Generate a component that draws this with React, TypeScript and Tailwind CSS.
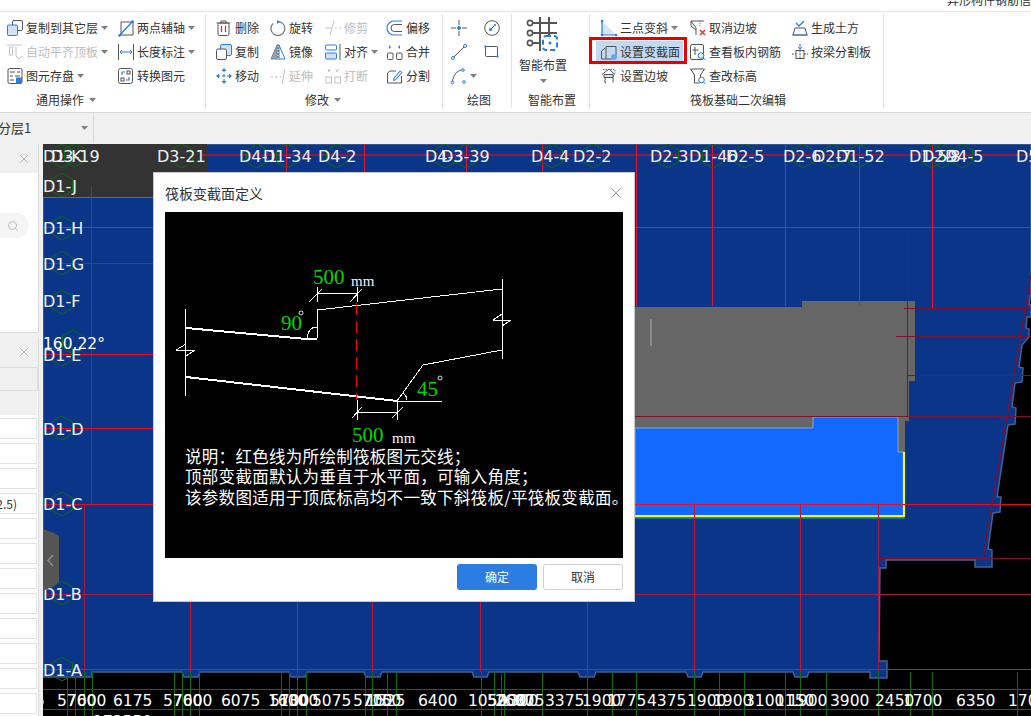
import type { ReactNode } from "react";
import { Search, X } from "lucide-react";

const B = "#2a7de1";
const G = "#555555";
const L = "#c4c4c4";

function Svg({ children, size = 16 }: { children: ReactNode; size?: number }) {
  return (
    <svg width={size} height={size} viewBox="0 0 16 16" fill="none" strokeWidth="1" className="block overflow-visible">
      {children}
    </svg>
  );
}

const icons: Record<string, ReactNode> = {
  copyLayer: (
    <Svg>
      <rect x="5.5" y="0.5" width="10" height="10" rx="1.5" stroke={G} fill="#fff" />
      <rect x="0.5" y="5" width="10" height="10.5" rx="1" stroke={B} fill="#cfe2f8" />
    </Svg>
  ),
  autoAlign: (
    <Svg>
      <path d="M0 1h15M2.5 3v8h3V3zM9 3v9l3 3 3-3" stroke={L} />
    </Svg>
  ),
  save: (
    <Svg>
      <rect x="1" y="0.5" width="14" height="15" rx="1.5" stroke={G} />
      <path d="M3 4h5M10 4h3M3 8h3M8 8h5M3 12h4" stroke={G} />
      <rect x="9" y="9.5" width="6" height="6" fill={B} />
    </Svg>
  ),
  axis: (
    <Svg>
      <path d="M3 2h12M3 2v13M15 2v13M3 15h12" stroke={G} />
      <path d="M1 16L15 1" stroke={B} strokeWidth="1.4" />
      <circle cx="1.5" cy="15.5" r="1.3" fill={B} />
      <circle cx="14.5" cy="1.5" r="1.3" fill={B} />
    </Svg>
  ),
  measure: (
    <Svg>
      <path d="M0.5 0v16M15.5 0v16" stroke={G} />
      <path d="M2 8h12M4 6L2 8l2 2M12 6l2 2-2 2" stroke={B} />
    </Svg>
  ),
  convert: (
    <Svg>
      <rect x="0.5" y="0.5" width="14" height="15" rx="2" stroke={G} />
      <path d="M4 7V4h3M11 9v3H8" stroke={B} strokeWidth="1.2" />
      <rect x="9" y="3" width="3" height="3" stroke={G} />
      <rect x="3" y="10" width="3" height="3" stroke={G} />
    </Svg>
  ),
  trash: (
    <Svg>
      <path d="M0.5 3h14M5 3V1h5v2" stroke={G} />
      <rect x="2" y="3" width="11" height="12.5" rx="1.5" stroke={G} />
      <path d="M5.5 6v6M9.5 6v6" stroke="#e02020" strokeWidth="1.2" />
    </Svg>
  ),
  rotate: (
    <Svg>
      <path d="M9 1.6A7 7 0 1 1 3 3.5" stroke={G} strokeOpacity="0.8" strokeWidth="1.2" />
      <path d="M7 0l3 2-3 2z" fill={B} />
    </Svg>
  ),
  copy: (
    <Svg>
      <rect x="4.5" y="0.5" width="11" height="11" rx="1.5" stroke={B} fill="#cfe2f8" />
      <rect x="0.5" y="5" width="10" height="10.5" rx="1.5" stroke={G} fill="#fff" />
    </Svg>
  ),
  mirror: (
    <Svg>
      <path d="M7 1L1 15h6z" fill="#9aa2ad" stroke="#7b8593" />
      <path d="M9 1l6 14H9z" fill="#fff" stroke={B} />
      <path d="M8 0v16" stroke={G} strokeDasharray="2 1" />
    </Svg>
  ),
  move: (
    <Svg>
      <path d="M8 1v14M1 8h14" stroke={B} strokeDasharray="3 2" />
      <path d="M8 0l2.5 3h-5zM8 16l2.5-3h-5zM0 8l3-2.5v5zM16 8l-3-2.5v5z" fill={B} />
    </Svg>
  ),
  extend: (
    <Svg>
      <path d="M0 9h3M5 9h3M10 9h2M15 1l-3 15" stroke={L} />
    </Svg>
  ),
  trim: (
    <Svg>
      <path d="M0 8h7M10 8h2M14 8h2M9 1L5 15" stroke={L} />
    </Svg>
  ),
  break: (
    <Svg>
      <rect x="1" y="9" width="5.5" height="6" stroke={L} />
      <rect x="10" y="9" width="5.5" height="6" stroke={L} />
      <path d="M3 1l1 3M5 1L4 4M11 1l1 3M14 1l-2 3" stroke={L} />
    </Svg>
  ),
  align: (
    <Svg>
      <rect x="0.5" y="1" width="11" height="5" rx="1" stroke={B} />
      <rect x="0.5" y="9" width="11" height="6" rx="1" stroke={B} fill="#cfe2f8" />
      <path d="M15 0v16" stroke={G} />
    </Svg>
  ),
  offset: (
    <Svg>
      <path d="M15 1H7a7 7 0 0 0 0 14h8" stroke={B} strokeWidth="1.2" />
      <path d="M15 4.500H7.500a3.500 3.500 0 0 0 0 7H15" stroke={G} />
    </Svg>
  ),
  merge: (
    <Svg>
      <rect x="0.5" y="9" width="5.500" height="6.500" rx="1" stroke={G} />
      <rect x="9.500" y="9" width="5.500" height="6.500" rx="1" stroke={G} />
      <path d="M2 1l2 2-2 2zM13 1l-2 2 2 2z" fill={B} />
    </Svg>
  ),
  split: (
    <Svg>
      <path d="M14.500 8v7H.5V5L3 3h6" stroke={G} />
      <path d="M7 10l6-7 2 1.500-6 7-2.500 1z" stroke={B} fill="#cfe2f8" />
    </Svg>
  ),
  point: (
    <Svg>
      <path d="M0 8h5M11 8h5M8 0v5M8 11v5" stroke={G} />
      <circle cx="8" cy="8" r="2" fill={B} />
    </Svg>
  ),
  dial: (
    <Svg>
      <circle cx="8" cy="8" r="7.300" stroke={G} />
      <path d="M7 9l4-4" stroke={G} />
      <circle cx="6.500" cy="9.500" r="1.500" fill={B} />
      <circle cx="11" cy="5" r="1" fill={B} />
    </Svg>
  ),
  line: (
    <Svg>
      <path d="M2 14L14 2" stroke={G} />
      <circle cx="2" cy="14" r="1.500" stroke={B} fill="#fff" />
      <circle cx="14" cy="2" r="1.500" stroke={B} fill="#fff" />
    </Svg>
  ),
  rect: (
    <Svg>
      <rect x="1.500" y="2.500" width="12" height="10" rx="1" stroke={G} />
      <rect x="0.500" y="1.500" width="2" height="2" fill={B} />
      <rect x="12.500" y="11.500" width="2" height="2" fill={B} />
    </Svg>
  ),
  arc: (
    <Svg>
      <path d="M1.500 14C2 7 6 2.500 11 2" stroke={G} />
      <circle cx="1.500" cy="14.500" r="1.300" stroke={B} fill="#fff" />
      <circle cx="12" cy="2" r="1.300" stroke={B} fill="#fff" />
      <circle cx="13" cy="14" r="1.300" stroke={B} fill="#fff" />
    </Svg>
  ),
  threePoint: (
    <Svg>
      <path d="M1 1v14h14z" fill="#d5e5f8" />
      <path d="M1 1v14h14" stroke={B} strokeWidth="1.200" />
      <circle cx="1" cy="1" r="1.300" fill={B} />
      <circle cx="1" cy="15" r="1.300" fill={B} />
      <circle cx="15" cy="15" r="1.300" fill={B} />
    </Svg>
  ),
  section: (
    <Svg>
      <path d="M0.500 7L5 3.500V15H.5zM5 2.500h10v9" stroke={G} />
      <path d="M5 15h6" stroke={G} />
      <circle cx="13" cy="13" r="3" fill="#6fa5e6" />
    </Svg>
  ),
  slope: (
    <Svg>
      <path d="M1 6.500L8 1l6 5.500M4 6.500V15h1M12 6.500v8" stroke={G} />
      <path d="M2 1.500h12v4" stroke={B} strokeDasharray="1.500 1" />
      <path d="M3 6.500h9v3H3z" fill="#cfe2f8" stroke={G} />
    </Svg>
  ),
  cancelSlope: (
    <Svg>
      <path d="M1 1h13M1 1l5 7v7M1 1v5l5 4" stroke={G} />
      <path d="M10 1v5" stroke={B} strokeDasharray="1 1" />
      <path d="M10 10l5 5M15 10l-5 5" stroke="#e03030" strokeWidth="1.400" />
    </Svg>
  ),
  rebar: (
    <Svg>
      <rect x="0.500" y="0.500" width="13" height="15" rx="1.500" stroke={G} />
      <path d="M5 3v8M2.500 6h6" stroke={G} />
      <circle cx="11" cy="11.500" r="2.800" stroke={B} fill="#fff" />
      <path d="M13 13.500l2.500 2.500" stroke={B} />
    </Svg>
  ),
  elevation: (
    <Svg>
      <path d="M0.500 1h14l-4 6v5M.5 1l4 6v8h5" stroke={G} />
      <circle cx="11.500" cy="12" r="2.800" stroke={B} fill="#fff" />
      <path d="M13.500 14l2 2" stroke={B} />
    </Svg>
  ),
  earth: (
    <Svg>
      <path d="M4 3l3 3 5-5" stroke={B} strokeWidth="1.400" />
      <path d="M3 8h10l2 7H1z" stroke={G} />
      <path d="M0 15h16" stroke={B} />
    </Svg>
  ),
  beamSplit: (
    <Svg>
      <path d="M8 0v5M6 3l2 2.500L10 3" stroke={B} />
      <rect x="4" y="6.500" width="8" height="8" stroke={G} />
      <path d="M0 10h4M12 10h4M8 6.500v8" stroke={G} strokeDasharray="2 1" />
    </Svg>
  ),
};

function Caret() {
  return (
    <svg width="7" height="4" viewBox="0 0 7 4" className="block shrink-0">
      <path d="M0 0h7L3.500 4z" fill="#808080" />
    </svg>
  );
}

function Tool({ icon, label, caret, disabled }: { icon: string; label: string; caret?: boolean; disabled?: boolean }) {
  return (
    <div className="flex h-[24px] items-center">
      <span className="mr-[3px] w-[16px] shrink-0">{icons[icon]}</span>
      <span className={disabled ? "whitespace-nowrap text-[#bdbdbd]" : "whitespace-nowrap text-[#333]"}>{label}</span>
      {caret && (
        <span className="ml-[3px]">
          <Caret />
        </span>
      )}
    </div>
  );
}

function IconTool({ icon, caret }: { icon: string; caret?: boolean }) {
  return (
    <div className="flex h-[24px] items-center gap-[3px]">
      <span className="w-[16px]">{icons[icon]}</span>
      {caret && <Caret />}
    </div>
  );
}

function Group({ className, label, labelClass, caret, children }: { className: string; label: string; labelClass: string; caret?: boolean; children: ReactNode }) {
  return (
    <div className={className}>
      <div className="mt-[4px] flex h-[72px]">{children}</div>
      <div className={`flex h-[24px] items-center gap-[5px] text-[#333] ${labelClass}`}>
        <span>{label}</span>
        {caret && <Caret />}
      </div>
    </div>
  );
}

function Sep() {
  return <div className="mt-[2px] h-[94px] w-px shrink-0 bg-[#e2e2e2]" />;
}

function Ribbon() {
  return (
    <div className="flex h-[100px] shrink-0 bg-white">
      <Group className="w-[205px] shrink-0" label="通用操作" labelClass="pl-[36px]" caret>
        <div className="ml-[7px] w-[111px]">
          <Tool icon="copyLayer" label="复制到其它层" caret />
          <Tool icon="autoAlign" label="自动平齐顶板" caret disabled />
          <Tool icon="save" label="图元存盘" caret />
        </div>
        <div>
          <Tool icon="axis" label="两点辅轴" caret />
          <Tool icon="measure" label="长度标注" caret />
          <Tool icon="convert" label="转换图元" />
        </div>
      </Group>
      <Sep />
      <Group className="w-[236px] shrink-0" label="修改" labelClass="pl-[99px]" caret>
        <div className="ml-[10px] w-[54px]">
          <Tool icon="trash" label="删除" />
          <Tool icon="copy" label="复制" />
          <Tool icon="move" label="移动" />
        </div>
        <div className="w-[55px]">
          <Tool icon="rotate" label="旋转" />
          <Tool icon="mirror" label="镜像" />
          <Tool icon="extend" label="延伸" disabled />
        </div>
        <div className="w-[62px]">
          <Tool icon="trim" label="修剪" disabled />
          <Tool icon="align" label="对齐" caret />
          <Tool icon="break" label="打断" disabled />
        </div>
        <div>
          <Tool icon="offset" label="偏移" />
          <Tool icon="merge" label="合并" />
          <Tool icon="split" label="分割" />
        </div>
      </Group>
      <Sep />
      <Group className="w-[68px] shrink-0" label="绘图" labelClass="pl-[24px]">
        <div className="ml-[8px] w-[33px]">
          <IconTool icon="point" />
          <IconTool icon="line" />
          <IconTool icon="arc" caret />
        </div>
        <div>
          <IconTool icon="dial" />
          <IconTool icon="rect" />
        </div>
      </Group>
      <Sep />
      <Group className="w-[77px] shrink-0" label="智能布置" labelClass="pl-[16px]">
        <div className="ml-[7px] flex w-[48px] flex-col items-center pt-[1px]">
          <svg width="34" height="34" viewBox="0 0 34 34" fill="none" className="block">
            <path d="M5 6h26M5 16h26M5 26h10M14 0v34M23 0v18" stroke={G} strokeWidth="2" />
            <circle cx="4" cy="6" r="2.600" stroke={G} strokeWidth="1.600" fill="#fff" />
            <circle cx="4" cy="16" r="2.600" stroke={G} strokeWidth="1.600" fill="#fff" />
            <circle cx="4" cy="26" r="2.600" stroke={G} strokeWidth="1.600" fill="#fff" />
            <rect x="17" y="19" width="14" height="14" rx="3" stroke={B} strokeWidth="2" strokeDasharray="5 3" fill="#fff" />
            <circle cx="24" cy="26" r="1.500" fill={B} />
          </svg>
          <div className="mt-[6px] whitespace-nowrap text-[#333]">智能布置</div>
          <div className="mt-[6px]">
            <Caret />
          </div>
        </div>
      </Group>
      <Sep />
      <Group className="w-[293px] shrink-0" label="筏板基础二次编辑" labelClass="pl-[100px]">
        <div className="ml-[11px] w-[89px]">
          <Tool icon="threePoint" label="三点变斜" caret />
          <div className="relative">
            <div className="absolute left-[-5px] top-[1px] h-[20px] w-[87px] bg-[#c2d9f2]" />
            <div className="relative">
              <Tool icon="section" label="设置变截面" />
            </div>
            <div className="absolute left-[-12px] top-[-3px] h-[27px] w-[98px] border-[3px] border-[#e80000]" />
          </div>
          <Tool icon="slope" label="设置边坡" />
        </div>
        <div className="w-[102px]">
          <Tool icon="cancelSlope" label="取消边坡" />
          <Tool icon="rebar" label="查看板内钢筋" />
          <Tool icon="elevation" label="查改标高" />
        </div>
        <div>
          <Tool icon="earth" label="生成土方" />
          <Tool icon="beamSplit" label="按梁分割板" />
        </div>
      </Group>
      <Sep />
    </div>
  );
}

function LeftPanels() {
  const rows = Array.from({ length: 12 }, (_, i) => i);
  return (
    <div className="flex w-[43px] shrink-0 flex-col overflow-hidden bg-[#f0f0f0]">
      <div className="h-[189px] w-[39px] shrink-0 border-r border-b border-[#dcdcdc] bg-white">
        <div className="flex h-[29px] items-center justify-end bg-[#f0f0f0] pr-[7px]">
          <X size={14} strokeWidth={1.2} color="#999" />
        </div>
        <div className="mt-[40px] flex h-[25px] w-[29px] items-center justify-end rounded-r-full bg-[#f5f5f5] pr-[10px]">
          <Search size={12} strokeWidth={1.5} color="#aaa" />
        </div>
      </div>
      <div className="mt-[4px] w-[39px] flex-1 border-r border-[#dcdcdc] bg-white">
        <div className="flex h-[30px] items-center justify-end bg-[#f0f0f0] pr-[7px]">
          <X size={14} strokeWidth={1.2} color="#999" />
        </div>
        <div className="h-[24px] w-[38px] border border-l-0 border-[#dedede] bg-[#f0f0f0]" />
        <div className="h-[24px] w-[37px] bg-[#f0f0f0]" />
        <div className="mt-[3px] flex flex-col gap-[4px]">
          {rows.map((i) => (
            <div key={i} className="flex h-[21px] w-[37px] items-center justify-end overflow-hidden border border-l-0 border-[#e2e2e2] bg-white pr-[19px] text-[12px] text-[#333]">
              {i === 3 ? "2.5)" : ""}
            </div>
          ))}
        </div>
      </div>
    </div>
  );
}

const FLAT = "'DejaVu Sans', sans-serif";
const BLUE = "#0b3588";

const hexes: [number, number][] = [
  [62, 156], [75, 155], [182, 156], [257, 156], [287, 156], [337, 156], [445, 156], [466, 156], [552, 156], [593, 156],
  [668, 156], [713, 156], [745, 156], [803, 156], [833, 156], [859, 156], [932, 156], [942, 156], [962, 156],
  [62, 185], [62, 228], [62, 263], [62, 302], [73, 342], [62, 354], [62, 428], [62, 504], [62, 593], [62, 669],
];

const sideLabels: [string, number, number][] = [
  ["D1-K", 43, 162], ["D3-19", 51, 162], ["D3-21", 157, 162], ["D4-1", 239, 162], ["D1-34", 263, 162], ["D4-2", 318, 162],
  ["D4-3", 425, 162], ["D3-39", 441, 162], ["D4-4", 531, 162], ["D2-2", 573, 162], ["D2-3", 650, 162], ["D1-46", 689, 162],
  ["D2-5", 726, 162], ["D2-6", 783, 162], ["D2-7", 813, 162], ["D1-52", 836, 162], ["D1-59", 909, 162], ["D2-8", 922, 162],
  ["D4-5", 945, 162], ["D5", 1016, 162],
  ["D1-J", 43, 192], ["D1-H", 43, 234], ["D1-G", 43, 270], ["D1-F", 43, 307], ["D1-E", 43, 361],
  ["D1-D", 43, 435], ["D1-C", 43, 510], ["D1-B", 43, 600], ["D1-A", 43, 676],
];

const spans: [string, number][] = [
  ["5", 35], ["5700", 57], ["7600", 67], ["6175", 113], ["5700", 163], ["7600", 173], ["6075", 221], ["5700", 270], ["1300", 279],
  ["1600", 268], ["5075", 312], ["5700", 353], ["7150", 362], ["1525", 366], ["6400", 418], ["1050", 468], ["5200", 487], ["2600", 495],
  ["1300", 499], ["875", 515], ["3375", 545], ["1900", 582], ["1775", 607], ["4375", 647], ["1900", 687], ["1900", 713], ["3100", 745],
  ["1150", 775], ["1900", 788], ["3900", 830], ["2450", 875], ["1700", 903], ["6350", 956], ["1700", 1008], ["172550", 93],
];

const bottomGrid = [67, 75, 84, 92, 174, 182, 190, 199, 281, 289, 297, 306, 365, 372, 387, 396, 481, 494, 501, 504, 542, 587, 612, 636, 694, 719, 744, 785, 800, 826, 878, 910, 932, 1017];

// Plate outline with the stepped column caps along the right and bottom edges.
const plate =
  "43,144 1031,144 1031,296 1030,296 1029,305 1031,305 1031,317 1027,317 1026,328 1029,329 1029,337 1022,345 1019,367 1023,368 1022,382 1015,383 1012,407 1016,408 1015,424 1008,425 997,497 1001,497 1000,512 993,513 988,549 992,550 992,567 975,567 975,560 886,560 886,568 880,568 879,661 887,661 887,678 870,678 870,672 809,672 807,677 795,677 793,672 703,672 701,677 688,677 686,672 596,672 594,677 580,677 578,672 489,672 487,677 474,677 472,672 382,672 380,677 366,677 364,672 307,672 305,677 291,677 289,672 200,672 198,677 184,677 182,672 92,672 92,677 43,677";

function Board() {
  const bright = "#e8102a";
  const dark = "#7d1230";
  return (
    <svg viewBox="43 144 988 572" width="988" height="572" className="block">
      <rect x="43" y="144" width="988" height="572" fill="#000" />
      <polygon points={plate} fill={BLUE} stroke="#44608f" strokeWidth="1.500" />
      <rect x="43" y="144" width="164" height="53" fill="#333" />
      <rect x="43" y="197" width="164" height="1" fill="#4f6d9f" />

      <polygon points="635,307 802,307 802,301 915,301 915,381 909,381 909,421 905,421 905,452 898,452 898,428 635,428" fill="#666" />
      <polygon points="635,428 813,428 813,417 898,417 898,452 904,452 904,517 635,517" fill="#1169ff" stroke="#8fb4ea" strokeWidth="0.800" />
      <path d="M904 452V516H635" stroke="#f7f71e" strokeWidth="2.200" fill="none" />
      <path d="M635 518H905" stroke="#0fa5b8" strokeWidth="1" />
      <rect x="650" y="319" width="2" height="27" fill="#8a8a8a" />

      <g fill="none" shapeRendering="crispEdges" strokeWidth="1">
        <path d="M201 154.500H1031" stroke="#8d1a3f" strokeWidth="2" />
        <path d="M43 263.500H160M91.500 186V504M43 594.500H1031M84.500 504V672" stroke="#a51c42" />
        <path d="M43 227.500H1031M286.500 144V230M364.500 144V230M466.500 144V230M542.500 144V230M636.500 144V306M712.500 144V306M785.500 144V306M859.500 144V306M932.500 144V308" stroke={bright} />
        <path d="M43 354.500H160M43 428.500H160M43 504.500H1031M43 669.500H1031" stroke="#f00a1e" />
        <path d="M190.500 504V672M297.500 504V672M372.500 504V672M480.500 504V672M587.500 504V672M694.500 504V672M800.500 504V672" stroke="#c81432" />
        <path d="M878.500 504V672" stroke="#a51c42" />
        <path d="M907.500 228V416M904 308.500H1031M896 336.500H1031M907 375.500H1031M635 416.500H1031M878 558.500H1031" stroke={dark} />
      </g>
      <path d="M1031 275L983 558" stroke="#7d1230" strokeWidth="1.200" fill="none" />

      <g stroke="#0d6a16" strokeWidth="1" fill="none">
        <path d="M43 689.500H1031M43 709.500H1031" shapeRendering="crispEdges" stroke="#0a6e0e" />
        {bottomGrid.map((x) => (
          <path key={x} d={`M${x + 0.5} 672V716`} shapeRendering="crispEdges" stroke="#0a6e0e" />
        ))}
        {hexes.map(([x, y]) => (
          <polygon key={`${x}-${y}`} points={`${x},${y - 12} ${x + 10.500},${y - 6} ${x + 10.500},${y + 6} ${x},${y + 12} ${x - 10.500},${y + 6} ${x - 10.500},${y - 6}`} />
        ))}
      </g>

      <g fontSize="16" fontFamily={FLAT} fill="#eef1f7">
        {sideLabels.map(([t, x, y]) => (
          <text key={`${t}-${x}-${y}`} x={x} y={y}>
            {t}
          </text>
        ))}
      </g>
      <g fontSize="15.500" fontFamily={FLAT} fill="#fff">
        <text x="43" y="349">160.22°</text>
        {spans.map(([t, x], i) => (
          <text key={`${t}-${i}`} x={x} y={t === "172550" ? 727 : 706}>
            {t}
          </text>
        ))}
      </g>

      <path d="M43 529L54 533L59 536V582L54 586L43 591Z" fill="#555" />
      <path d="M53 555L48 560.500L53 566" stroke="#8c8c8c" strokeWidth="1.500" fill="none" />
    </svg>
  );
}

// Parametric diagram of the raft section shown inside the dialog.
function SectionDiagram() {
  const serif = "'Liberation Serif', serif";
  const cjk = "'Noto Sans CJK SC', sans-serif";
  return (
    <svg viewBox="165 212 458 346" width="458" height="346" className="block">
      <rect x="165" y="212" width="458" height="346" fill="#000" />
      <g fill="none" stroke="#fff" strokeWidth="1" shapeRendering="crispEdges">
        <path d="M185.500 309V396M502.500 279V359" />
        <path d="M186 328L301 338.500L317 338.500" strokeWidth="2" />
        <path d="M317 338V310L502 289" />
        <path d="M502 350L423 365L397 401" />
        <path d="M186 377L397 401" strokeWidth="2" />
        <path d="M397 401.500H442" />
        <path d="M176 350H195M176 350L186 344M186 356L195 350" />
        <path d="M493 320H511M493 320L502 314M502 326L511 320" />
        <path d="M317 293.500H357M317.500 287V302M357.500 287V302M309 302L322 289M350 302L362 289" />
        <path d="M357 412.500H397M357.500 400V420M397.500 401V420M352 418L362 407M392 418L403 407" />
        <path d="M308 338A9 9 0 0 1 317 327M407 400A10 10 0 0 0 403 393" />
      </g>
      <path d="M356.500 303V400" stroke="#ff0000" strokeWidth="1" strokeDasharray="12 6" shapeRendering="crispEdges" />

      <g fontFamily={serif} fill="#00d800" fontSize="21">
        <text x="313" y="284">500</text>
        <text x="281" y="330">90</text>
        <text x="417" y="396">45</text>
        <text x="352" y="442">500</text>
      </g>
      <g fontFamily={serif} fill="#f2f6ff" fontSize="15">
        <text x="351" y="286">mm</text>
        <text x="392" y="443">mm</text>
      </g>
      <circle cx="301" cy="313" r="2" stroke="#cfe3ff" fill="none" />
      <circle cx="440" cy="378" r="2" stroke="#cfe3ff" fill="none" />

      <g fontFamily={cjk} fill="#fff" fontSize="16.500" letterSpacing="0.300">
        <text x="185" y="463">说明：红色线为所绘制筏板图元交线；</text>
        <text x="185" y="483">顶部变截面默认为垂直于水平面，可输入角度；</text>
        <text x="185" y="504">该参数图适用于顶底标高均不一致下斜筏板/平筏板变截面。</text>
      </g>
    </svg>
  );
}

function Dialog() {
  return (
    <div className="absolute left-[110px] top-[28px] flex h-[430px] w-[482px] flex-col border border-[#c8c8c8] bg-white px-[11px]">
      <div className="flex h-[39px] shrink-0 items-center justify-between">
        <span className="text-[14px] text-[#333]">筏板变截面定义</span>
        <X size={18} strokeWidth={1.200} color="#999" className="mr-[-2px]" />
      </div>
      <SectionDiagram />
      <div className="mt-[6px] flex justify-end gap-[6px]">
        <button className="h-[26px] w-[80px] rounded-[3px] bg-[#2b7de1] text-[12px] text-white">确定</button>
        <button className="h-[26px] w-[80px] rounded-[3px] border border-[#d0d0d0] bg-white text-[12px] text-[#333]">取消</button>
      </div>
    </div>
  );
}

export default function App() {
  return (
    <div className="flex h-[716px] w-[1031px] flex-col overflow-hidden bg-[#f0f0f0] font-['Noto_Sans_CJK_SC','Noto_Sans',sans-serif] text-[12px] leading-[16px]">
      <div className="flex h-[12px] shrink-0 items-end overflow-hidden border-b border-[#e8e8e8] bg-white pb-[3px] pl-[947px]">
        <span className="whitespace-nowrap text-[#333]">异形构件钢筋信息</span>
      </div>
      <Ribbon />
      <div className="flex h-[32px] shrink-0 border-t border-[#d8d8d8] bg-[#f0f0f0]">
        <div className="flex h-[30px] w-[94px] items-center justify-between border-r border-[#d8d8d8] pr-[5px]">
          <span className="ml-[-2px] text-[13px] text-[#333]">分层1</span>
          <Caret />
        </div>
      </div>
      <div className="flex flex-1 overflow-hidden">
        <LeftPanels />
        <div className="relative flex-1 overflow-hidden">
          <Board />
          <Dialog />
        </div>
      </div>
    </div>
  );
}
